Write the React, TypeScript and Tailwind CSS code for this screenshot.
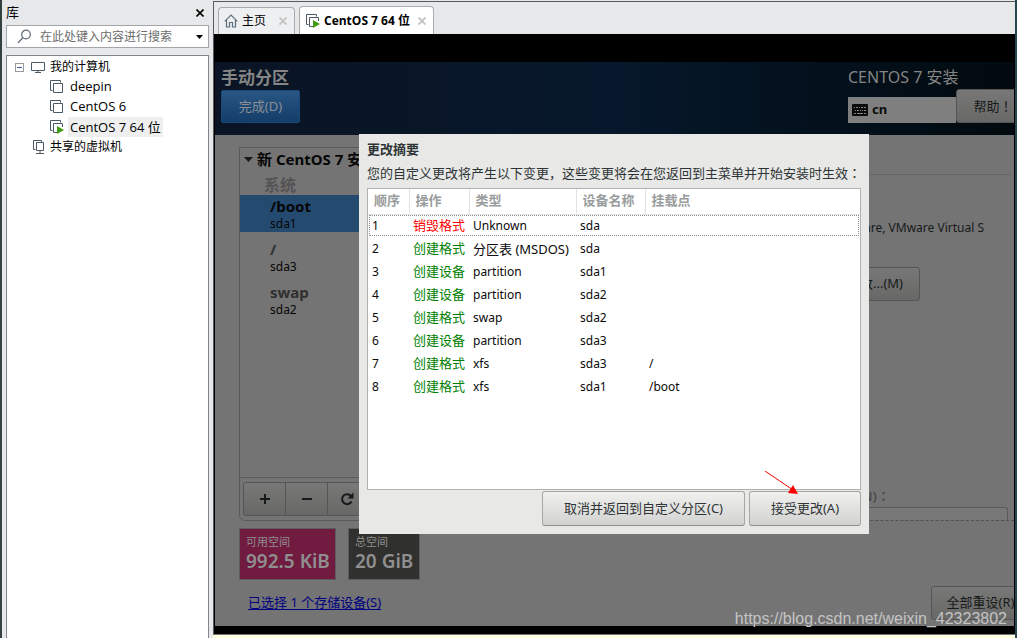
import type { ReactNode } from "react";
import clsx from "clsx";

const HOST_FONT = "font-['Open_Sans','Noto_Sans_CJK_SC',sans-serif]";
const GUEST_FONT = "font-['Noto_Sans','Noto_Sans_CJK_SC',sans-serif]";

const CHANGES = [
  { action: "销毁格式", type: "Unknown", device: "sda", mount: "", destroy: true },
  { action: "创建格式", type: "分区表 (MSDOS)", device: "sda", mount: "", wide: true },
  { action: "创建设备", type: "partition", device: "sda1", mount: "" },
  { action: "创建设备", type: "partition", device: "sda2", mount: "" },
  { action: "创建格式", type: "swap", device: "sda2", mount: "" },
  { action: "创建设备", type: "partition", device: "sda3", mount: "" },
  { action: "创建格式", type: "xfs", device: "sda3", mount: "/" },
  { action: "创建格式", type: "xfs", device: "sda1", mount: "/boot" },
];

const HEADERS = [
  { label: "顺序", width: "w-[41px]" },
  { label: "操作", width: "w-[60px]" },
  { label: "类型", width: "w-[107px]" },
  { label: "设备名称", width: "w-[69px]" },
  { label: "挂载点", width: "" },
];

const MOUNTS = [
  { name: "/boot", device: "sda1", selected: true },
  { name: "/", device: "sda3" },
  { name: "swap", device: "sda2" },
];

// Full-width marks are centred in the JP face
function Mark({ children }: { children: string }) {
  return <span className="font-['Noto_Sans_CJK_JP',sans-serif]" lang="ja">{children}</span>;
}

function VmIcon({ running = false }: { running?: boolean }) {
  return (
    <svg width="16" height="16" viewBox="0 0 16 16" fill="none" className="shrink-0">
      <path d="M3.5 11.5h-2v-10h10v2" stroke="#4b5a65" />
      <path d={running ? "M8 13.5H4.5v-9h9V8" : "M4.5 4.5h9v9h-9z"} stroke="#4b5a65" />
      {running && <path d="M8 7l7 4-7 4z" fill="#3f9c14" />}
    </svg>
  );
}

function MonitorIcon() {
  return (
    <svg width="16" height="14" viewBox="0 0 16 14" fill="none" stroke="#4b5a65" className="shrink-0">
      <path d="M1.5 2.5h13v8h-13zM8 10.5v2M5 12.5h6" />
    </svg>
  );
}

function SharedIcon() {
  return (
    <svg width="14" height="16" viewBox="0 0 14 16" fill="none" stroke="#4b5a65" className="shrink-0">
      <path d="M3.5 10.5h-2v-9h8v2M4.5 3.5h7v8h-7zM8 11.5v3M4 14.5h8" />
    </svg>
  );
}

function HomeIcon() {
  return (
    <svg width="14" height="14" viewBox="0 0 14 14" fill="none" stroke="#5a6e7c" strokeWidth="1.2" className="shrink-0">
      <path d="M.7 7.3L7 1l6.3 6.3M2.5 6v7h3V8.5h3V13h3V6" />
    </svg>
  );
}

function CloseIcon({ size, color, width }: { size: number; color: string; width: number }) {
  return (
    <svg width={size} height={size} viewBox="0 0 8 8" stroke={color} strokeWidth={width}>
      <path d="M.5.5l7 7M7.5.5l-7 7" />
    </svg>
  );
}

function KeyboardIcon() {
  return (
    <svg width="16" height="12" viewBox="0 0 16 12" className="shrink-0">
      <rect width="16" height="12" rx="1" fill="#0b0b0b" />
      <path
        d="M2 3.5h1M4 3.5h2M7 3.5h1M9 3.5h2M12 3.5h2M3 6.500h1M5 6.500h2M8 6.500h1M10 6.500h1M12 6.500h2M2 9.500h2M5 9.500h6M12 9.500h2"
        stroke="#858585"
        strokeWidth="1.2"
      />
    </svg>
  );
}

function TreeRow({ icon, children, className }: { icon: ReactNode; children: ReactNode; className: string }) {
  return (
    <li className={clsx("flex h-5 items-center", className)}>
      {icon}
      {children}
    </li>
  );
}

function Library() {
  return (
    <aside className="flex w-[213px] shrink-0 flex-col border-l-2 border-[#33413f] bg-[#e7e8ea] pr-1 pl-1">
      <div className="flex h-[25px] items-center justify-between pr-[5px]">
        <h2 className="text-[13px]">库</h2>
        <button type="button" aria-label="关闭">
          <CloseIcon size={8} color="#000" width={1.6} />
        </button>
      </div>
      <div className="flex h-[23px] items-center border border-[#a3a5a8] bg-white pr-[5px] pl-2.5">
        <svg width="15" height="15" viewBox="0 0 15 15" fill="none" stroke="#5f6b76" strokeWidth="1.2">
          <circle cx="9" cy="5.5" r="4.3" />
          <path d="M6 8.5L1 14" />
        </svg>
        <input
          aria-label="搜索"
          placeholder="在此处键入内容进行搜索"
          className="ml-2 min-w-0 flex-1 text-[12px] outline-none placeholder:text-[#6c6c6c]"
        />
        <button type="button" aria-label="搜索选项">
          <svg width="7" height="4" viewBox="0 0 7 4">
            <path d="M0 0h7L3.5 4z" />
          </svg>
        </button>
      </div>
      <ul className="mt-[7px] flex-1 border border-b-0 border-[#83878c] bg-white pt-px text-[12px]">
        <TreeRow
          className="gap-1 pl-2"
          icon={
            <>
              <button type="button" aria-label="折叠" className="mr-0.5 flex size-[9px] items-center justify-center border border-[#9b9b9b]">
                <span className="h-px w-[5px] bg-[#3a5a9a]" />
              </button>
              <MonitorIcon />
            </>
          }
        >
          我的计算机
        </TreeRow>
        <TreeRow className="gap-[5px] pl-[42px] text-[13px]" icon={<VmIcon />}>deepin</TreeRow>
        <TreeRow className="gap-[5px] pl-[42px] text-[13px]" icon={<VmIcon />}>CentOS 6</TreeRow>
        <TreeRow className="gap-[3px] pl-[42px] text-[13px]" icon={<VmIcon running />}>
          <span className="bg-[#efefef] px-0.5 leading-5">CentOS 7 64 位</span>
        </TreeRow>
        <TreeRow className="gap-1 pl-[25px]" icon={<SharedIcon />}>共享的虚拟机</TreeRow>
      </ul>
    </aside>
  );
}

function Tabs() {
  return (
    <nav className="flex h-8 items-end gap-1 bg-[#e7e8ea] pl-1">
      <div className="flex h-[27px] w-[77px] items-center rounded-t-sm border border-b-0 border-[#a9abae] bg-[#eeeff0] pr-[7px] pl-[5px] text-[12px]">
        <HomeIcon />
        <button type="button" className="ml-1">主页</button>
        <button type="button" aria-label="关闭主页" className="ml-auto">
          <CloseIcon size={8} color="#c2c2c2" width={1.8} />
        </button>
      </div>
      <div className="flex h-7 w-[135px] items-center rounded-t-sm border border-b-0 border-[#a9abae] bg-white pr-[7px] pl-[5px] text-[12px]">
        <VmIcon running />
        <button type="button" className="ml-[3px] font-bold whitespace-nowrap">CentOS 7 64 位</button>
        <button type="button" aria-label="关闭 CentOS 7 64 位" className="ml-auto">
          <CloseIcon size={8} color="#c2c2c2" width={1.8} />
        </button>
      </div>
    </nav>
  );
}

function DimButton({ children, className }: { children: ReactNode; className?: string }) {
  return (
    <button
      type="button"
      className={clsx(
        "h-[34px] shrink-0 rounded-[3px] border border-[#555] bg-linear-to-b from-[#787878] to-[#686866] text-[13px] whitespace-nowrap text-[#171a1a]",
        className,
      )}
    >
      {children}
    </button>
  );
}

function InstallerHeader() {
  return (
    <header className="flex h-[73px] justify-between bg-linear-to-r from-[#0a1424] via-[#07182c] to-[#020a0f] pl-[6px]">
      <div className="pt-1">
        <h1 className="text-[17px] leading-6 font-bold text-[#858585]">手动分区</h1>
        <button
          type="button"
          className="h-[33px] w-[79px] rounded-xs border border-[#1b4878] bg-linear-to-b from-[#295685] to-[#143d69] text-[13px] text-[#8b8f94]"
        >
          完成(D)
        </button>
      </div>
      <div className="w-[166px] overflow-hidden">
        <div className="pt-1 text-[16px] leading-[23px] text-[#858585]">CENTOS 7 安装</div>
        <div className="flex items-end">
          <div className="flex h-[26px] w-[108px] shrink-0 items-center gap-1 bg-[#7f7f7f] pl-1 text-[13px] font-bold text-[#0b0b0b]">
            <KeyboardIcon />
            cn
          </div>
          <DimButton className="w-[74px]">
            帮助<Mark>！</Mark>
          </DimButton>
        </div>
      </div>
    </header>
  );
}

function MountPanel() {
  return (
    <section className="flex flex-1 flex-col rounded-b-md border border-[#5a5a5a]">
      <h2 className="flex h-[22px] items-center gap-1 pl-1 text-[15px] font-bold whitespace-nowrap text-[#060606]">
        <svg width="9" height="5" viewBox="0 0 9 5">
          <path d="M0 0h9L4.5 5z" fill="#171a1a" />
        </svg>
        新 CentOS 7 安装
      </h2>
      <h3 className="mt-[5px] pl-6 text-[16px] leading-5 font-bold text-[#535353]">系统</h3>
      <ul className="flex-1">
        {MOUNTS.map((m) => (
          <li key={m.name} className={clsx("mb-1.5 h-[37px] pt-px pl-[30px]", m.selected && "bg-[#254a70]")}>
            <div className={clsx("text-[15px] leading-5 font-bold", m.selected ? "text-[#060606]" : "text-[#303030]")}>
              {m.name}
            </div>
            <div className="text-[12px] leading-4 text-[#060606]">{m.device}</div>
          </li>
        ))}
      </ul>
      <div className="flex h-[43px] items-center border-t border-[#5b5b5b] pl-[3px] text-[#101414]">
        <DimButton className="flex w-[43px] items-center justify-center rounded-r-none">
          <svg width="12" height="12" viewBox="0 0 12 12" stroke="currentColor" strokeWidth="2" aria-label="添加">
            <path d="M1 6h10M6 1v10" />
          </svg>
        </DimButton>
        <DimButton className="-ml-px flex w-[43px] items-center justify-center rounded-none">
          <svg width="12" height="12" viewBox="0 0 12 12" stroke="currentColor" strokeWidth="2" aria-label="删除">
            <path d="M1 6h10" />
          </svg>
        </DimButton>
        <DimButton className="-ml-px flex w-[43px] items-center rounded-l-none pl-3">
          <svg width="14" height="14" viewBox="0 0 14 14" fill="none" stroke="currentColor" strokeWidth="2" aria-label="刷新">
            <path d="M11.5 9.500A5 5 0 1 1 11 4" />
            <path d="M13.500.5v6h-6z" fill="currentColor" stroke="none" />
          </svg>
        </DimButton>
      </div>
    </section>
  );
}

function SpaceTile({ label, value, className }: { label: string; value: string; className: string }) {
  return (
    <div className={clsx("h-[52px] border border-[#5c5c5c] pt-[5px] pl-1.5 whitespace-nowrap text-[#8f8f8f]", className)}>
      <div className="text-[11px] leading-4">{label}</div>
      <div className="text-[19px] leading-[22px] font-semibold">{value}</div>
    </div>
  );
}

function InstallerBody() {
  return (
    <main className="flex flex-1 bg-[#747474]">
      <div className="flex w-[384px] shrink-0 flex-col pt-3 pb-[14px] pl-6">
        <MountPanel />
        <div className="mt-[7px] flex gap-3">
          <SpaceTile label="可用空间" value="992.5 KiB" className="w-[97px] bg-[#701b3f]" />
          <SpaceTile label="总空间" value="20 GiB" className="w-[72px] bg-[#30302e]" />
        </div>
        <a href="#storage" className="mt-3 ml-[9px] self-start text-[13px] leading-5 text-[#000080] underline underline-offset-2">
          已选择 1 个存储设备(S)
        </a>
      </div>
      <div className="flex min-w-0 flex-1 flex-col overflow-hidden">
        <hr className="mt-[39px] mr-1 border-[#666]" />
        <p className="mt-[43px] mr-[30px] text-right text-[12px] leading-5 text-[#171a1a]">VMware, VMware Virtual S</p>
        <DimButton className="mt-[29px] mr-[94px] self-end px-4">修改...(M)</DimButton>
        <div className="mt-auto">
          <label htmlFor="name" className="mr-[124px] block text-right text-[13px] leading-5 font-bold text-[#4e4e4e]">
            名称(N)<Mark>：</Mark>
          </label>
          <input id="name" disabled className="mt-px block h-[13px] w-[calc(100%-6px)] rounded-t-[3px] border border-b-0 border-[#5a5a5a] bg-[#787878]" />
          <div className="border-t border-dashed border-[#505050]" />
        </div>
        <DimButton className="mt-[65px] -mr-4 mb-[6px] w-[99px] self-end">全部重设(R)</DimButton>
      </div>
    </main>
  );
}

function DialogButton({ children, className }: { children: ReactNode; className: string }) {
  return (
    <button
      type="button"
      className={clsx(
        "h-[35px] rounded-[3px] border border-[#a5a7a4] border-b-[#8d8f8c] bg-linear-to-b from-[#f0f0ef] to-[#d2d2d0] text-[13px] text-[#2e3436]",
        className,
      )}
    >
      {children}
    </button>
  );
}

function SummaryDialog() {
  return (
    <div
      role="dialog"
      aria-labelledby="summary-title"
      className="absolute top-[100px] left-[145px] flex w-[510px] flex-col bg-[#e8e8e6] px-2 pt-[5px] pb-2 text-[#2e3436]"
    >
      <h2 id="summary-title" className="text-[13px] leading-5 font-bold">更改摘要</h2>
      <p className="mb-[5px] pt-1 text-[13px] leading-5 whitespace-nowrap">
        您的自定义更改将产生以下变更，这些变更将会在您返回到主菜单并开始安装时生效<Mark>：</Mark>
      </p>
      <div className="h-[302px] border border-[#b0b2af] bg-white">
        <table className="w-full table-fixed border-collapse text-left">
          <thead>
            <tr className="h-[25px] border-b border-[#e3e3e3] text-[13px] leading-4 text-[#999c9c]">
              {HEADERS.map((h) => (
                <th key={h.label} className={clsx("border-r border-[#e3e3e3] p-0 pb-0.5 pl-1.5 last:border-r-0", h.width)}>
                  {h.label}
                </th>
              ))}
            </tr>
          </thead>
          <tbody className="text-[12px] leading-4 text-[#0a0a0a]">
            {CHANGES.map((c, i) => (
              <tr
                key={i}
                className={clsx("h-[23px] whitespace-nowrap", i === 0 && "outline-1 -outline-offset-2 outline-dotted outline-[#8c8c8c]")}
              >
                <td className="p-0 pl-1">{i + 1}</td>
                <td className={clsx("p-0 pb-px pl-1 text-[13px]", c.destroy ? "text-[#f00]" : "text-[#008000]")}>{c.action}</td>
                <td className={clsx("p-0 pl-1", c.wide && "text-[13px]")}>{c.type}</td>
                <td className="p-0 pl-1">{c.device}</td>
                <td className="p-0 pl-1">{c.mount}</td>
              </tr>
            ))}
          </tbody>
        </table>
      </div>
      <div className="mt-px flex justify-end gap-1">
        <DialogButton className="w-[203px]">取消并返回到自定义分区(C)</DialogButton>
        <DialogButton className="w-[112px]">接受更改(A)</DialogButton>
      </div>
      <svg width="34" height="24" viewBox="0 0 34 24" className="absolute top-[337px] left-[406px]">
        <path d="M0 0l28 19" stroke="#f00" />
        <path d="M33 23l-10-1 5-8z" fill="#f00" />
      </svg>
    </div>
  );
}

export default function App() {
  return (
    <div className={clsx("flex min-h-screen overflow-hidden bg-[#e7e8ea] text-black", HOST_FONT)}>
      <Library />
      <div className="flex min-w-0 flex-1 flex-col border-r-2 border-[#24454c] pt-px">
        <div className="flex flex-1 flex-col border-t border-l border-[#5a5a5a]">
          <Tabs />
          <div className={clsx("relative flex flex-1 flex-col bg-black pt-7 pr-px pb-2 pl-px", GUEST_FONT)}>
            <InstallerHeader />
            <InstallerBody />
            <SummaryDialog />
            <div className="absolute right-2 bottom-[5px] font-['Liberation_Sans',sans-serif] text-[16px] leading-5 text-[#c4c4c4]">
              https://blog.csdn.net/weixin_42323802
            </div>
          </div>
        </div>
        <div className="h-1 border-t border-[#777] bg-[#ffffe1]" />
      </div>
    </div>
  );
}
